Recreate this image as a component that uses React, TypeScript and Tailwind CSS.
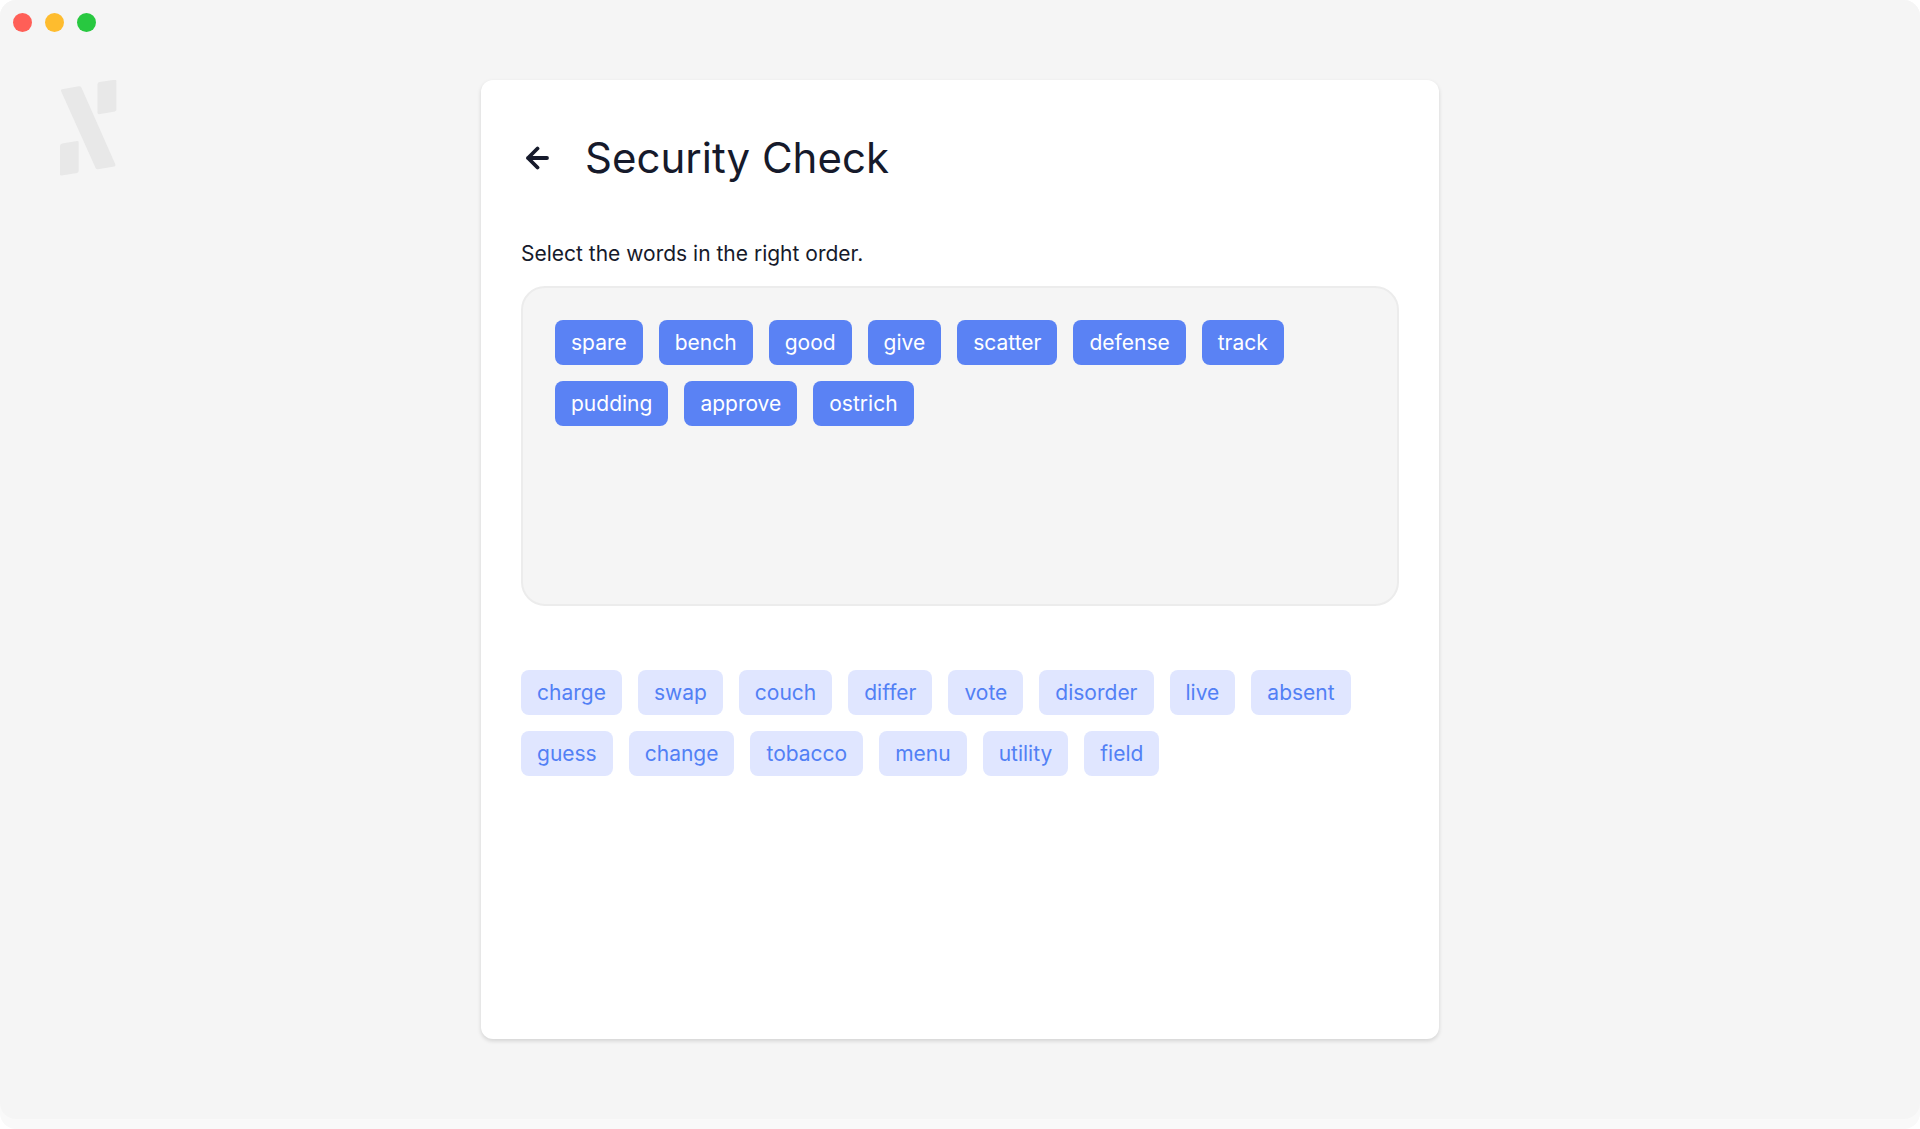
const selectedWords = [
  "spare", "bench", "good", "give", "scatter", "defense", "track",
  "pudding", "approve", "ostrich",
];

const availableWords = [
  "charge", "swap", "couch", "differ", "vote", "disorder", "live", "absent",
  "guess", "change", "tobacco", "menu", "utility", "field",
];

function WindowControls() {
  return (
    <div className="flex gap-[13px] px-[13px] pt-[13px]">
      <button type="button" aria-label="Close" className="size-[19px] rounded-full bg-[#ff5f57]" />
      <button type="button" aria-label="Minimize" className="size-[19px] rounded-full bg-[#febc2e]" />
      <button type="button" aria-label="Zoom" className="size-[19px] rounded-full bg-[#28c840]" />
    </div>
  );
}

function Logo() {
  return (
    <svg viewBox="0 0 58 97" aria-hidden="true" className="h-[97px] w-[58px] fill-[#e8e8e8]">
      <path d="M2.2 9.2 18.8 6.2Q20.6 6 21.4 7.6L55.3 84.2Q56 86 54.3 86.4L37.8 89.2Q36.4 89.4 35.6 88L1 11Q.4 9.5 2.2 9.2Z" />
      <path d="M39.5 2 55 -.3Q56.4 -.5 56.4 1V29.4Q56.4 31 54.8 31.6L39.2 34.2Q37.5 34.4 37.5 32.8V4.4Q37.5 2.5 39.5 2Z" />
      <path d="M2 63.4 17 61.1Q18.7 60.9 18.7 62.4V90.8Q18.7 92.4 17.1 92.9L1.6 95.5Q0 95.7 0 94.2V66Q0 64 2 63.4Z" />
    </svg>
  );
}

export default function App() {
  return (
    <div className="bg-white font-[Inter,sans-serif] text-[#161a2b]">
      <div className="flex min-h-screen flex-col rounded-2xl bg-[#f9f9f9] pb-2.5">
        <div className="flex-1 rounded-2xl bg-[#f5f5f5] pb-20">
          <WindowControls />
          <div className="mt-12 grid grid-cols-[1fr_minmax(0,958px)_1fr]">
            <div className="pl-[60px]">
              <Logo />
            </div>
            <main className="min-h-[959px] rounded-xl bg-white px-10 pt-[50px] shadow-[0_2px_4px_rgba(0,0,0,0.14)]">
              <header className="flex items-center gap-8">
                <button type="button" aria-label="Back" className="flex size-8 items-center justify-center">
                  <svg viewBox="0 0 24 24" aria-hidden="true" className="size-6 fill-none stroke-current stroke-[3.8]" strokeLinecap="round" strokeLinejoin="round">
                    <path d="M22 12H3M12.5 2.5 3 12l9.5 9.5" />
                  </svg>
                </button>
                <h1 className="text-[42px] leading-[56px]">Security Check</h1>
              </header>
              <p className="mt-[54px] text-[21px] leading-7">Select the words in the right order.</p>
              <section aria-label="Selected words" className="mt-[18px] flex min-h-80 flex-wrap content-start gap-4 rounded-3xl border-2 border-[#ececec] bg-[#f5f5f5] px-8 pt-8">
                {selectedWords.map((word) => (
                  <button key={word} type="button" className="h-[45px] rounded-lg bg-[#5a82f4] px-4 text-[21px] text-white">
                    {word}
                  </button>
                ))}
              </section>
              <section aria-label="Available words" className="mt-16 flex flex-wrap gap-4">
                {availableWords.map((word) => (
                  <button key={word} type="button" className="h-[45px] rounded-lg bg-[#e0e6ff] px-4 text-[21px] text-[#5280f5]">
                    {word}
                  </button>
                ))}
              </section>
            </main>
          </div>
        </div>
      </div>
    </div>
  );
}
